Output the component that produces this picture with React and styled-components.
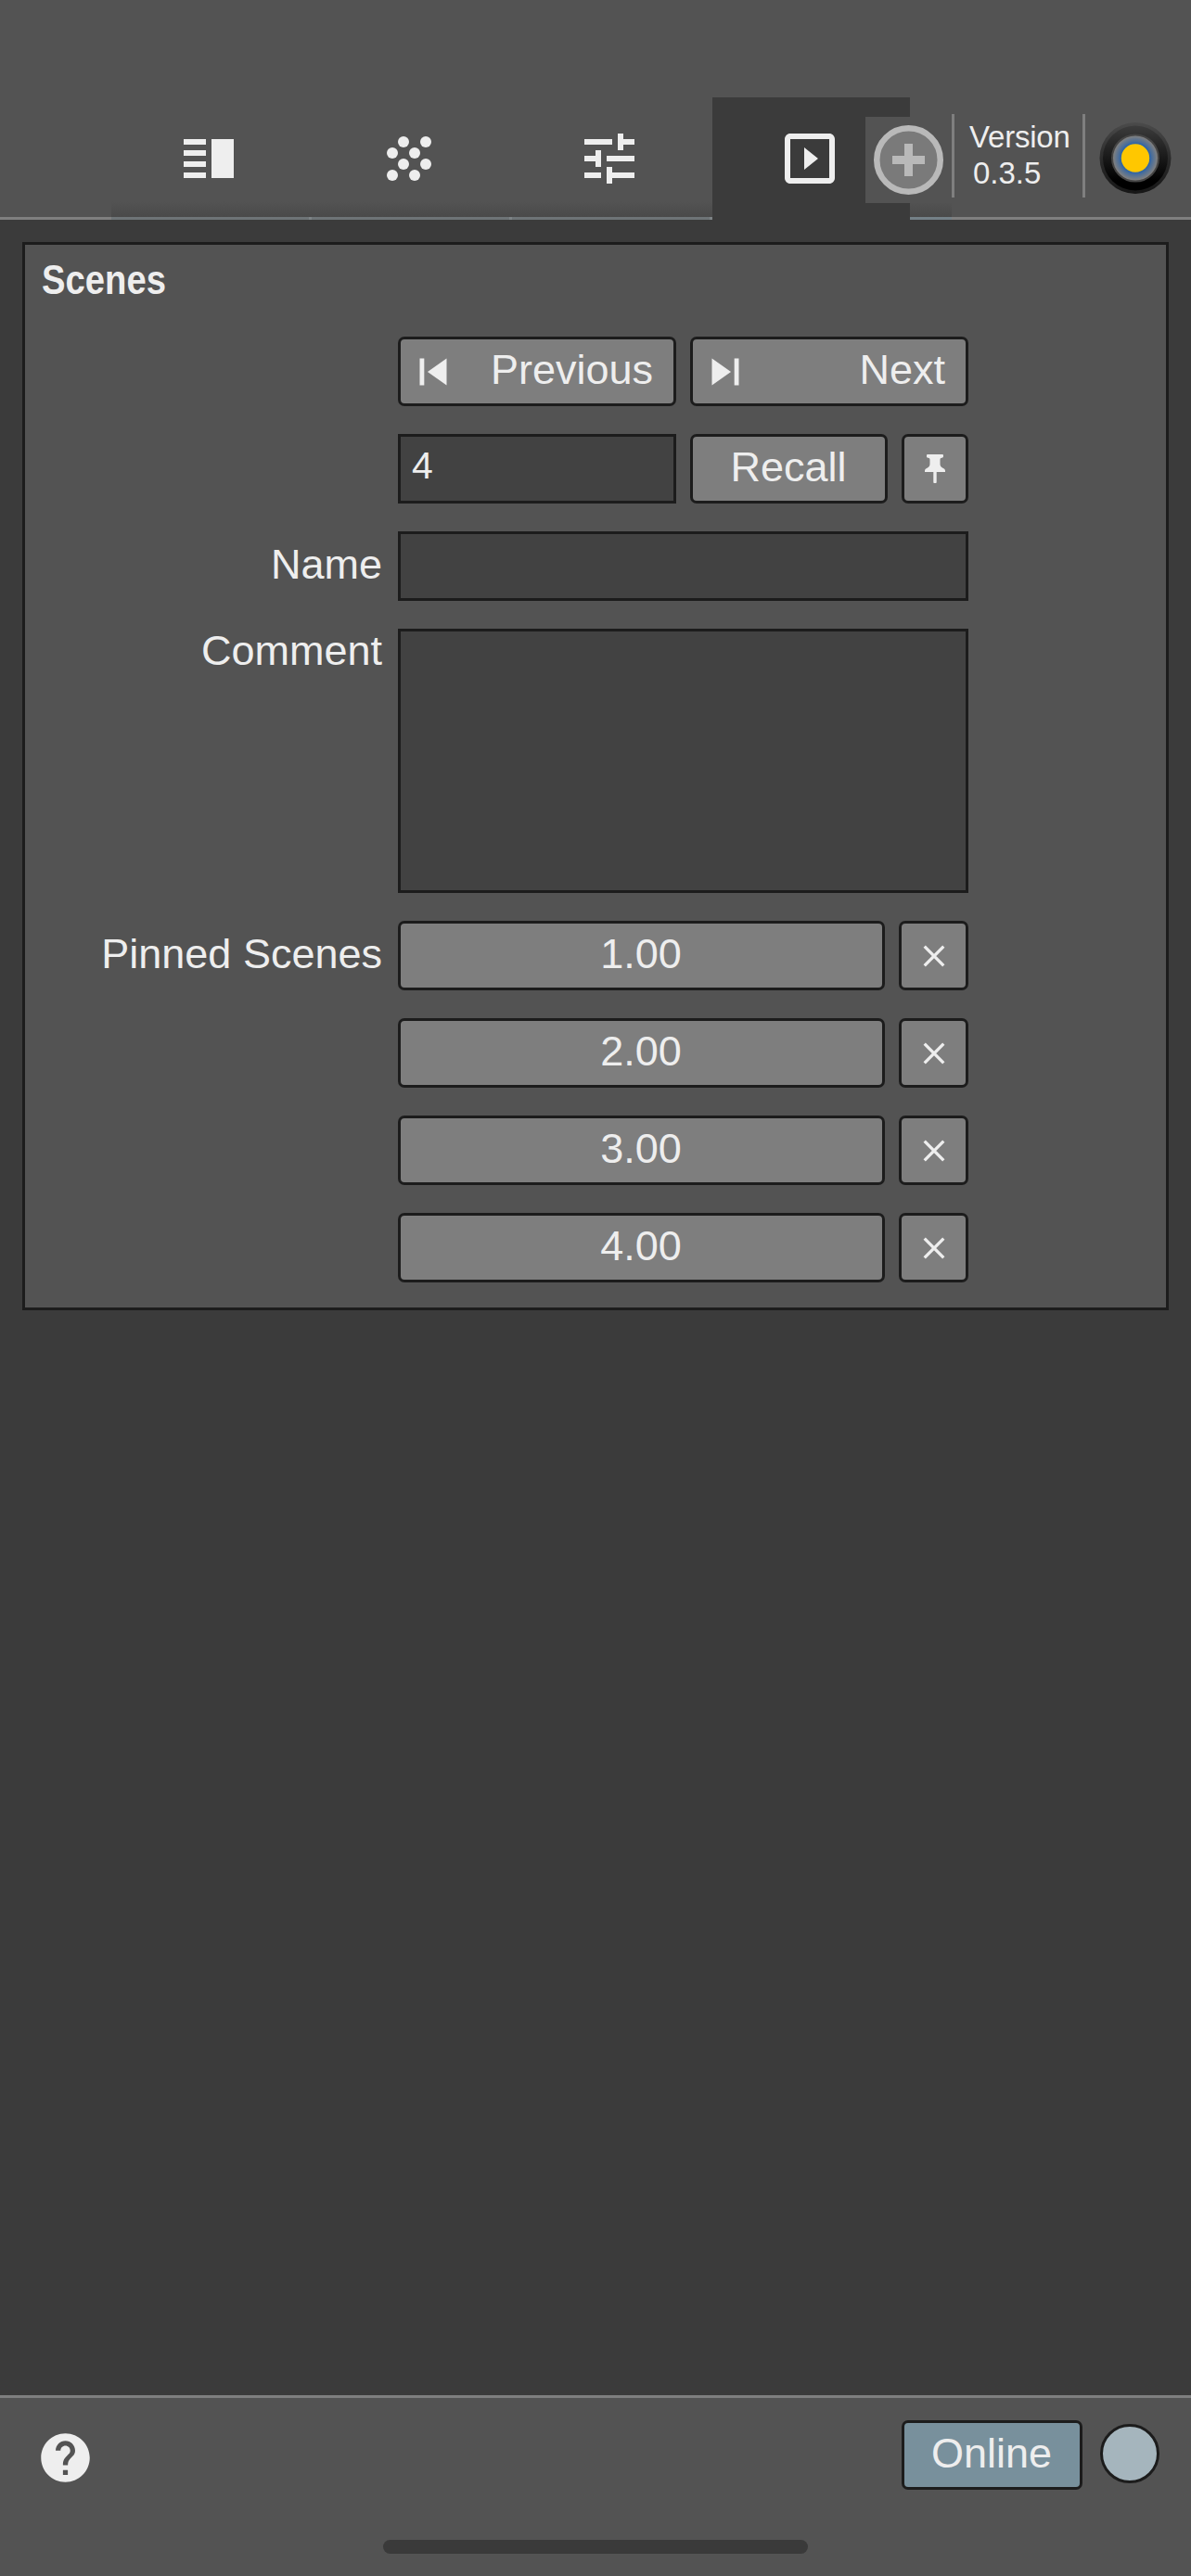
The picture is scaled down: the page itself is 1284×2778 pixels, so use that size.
import React from "react";
import styled, { createGlobalStyle, css } from "styled-components";

const GlobalStyle = createGlobalStyle`
  * { box-sizing: border-box; }
  html, body { margin: 0; padding: 0; background: #3b3b3b; }
  body {
    color: #eee;
    font-family: "Liberation Sans", Arial, sans-serif;
    font-size: 45px;
    line-height: 52px;
  }
  button, input, textarea { font: inherit; color: inherit; margin: 0; }
`;

const Screen = styled.div`
  display: flex;
  flex-direction: column;
  width: 1284px;
  height: 2778px;
  overflow: hidden;
  background: #3b3b3b;
`;

const Header = styled.header`
  position: relative;
  display: flex;
  flex: none;
  height: 237px;
  padding-top: 105px;
  background: #535353;
`;

const HeaderSpacer = styled.div`
  width: 120px;
  border-bottom: 3px solid #7f7f7f;
`;

const Tabs = styled.nav`
  display: flex;
  width: 906px;
  overflow: hidden;
`;

const shade = css`
  background: linear-gradient(to bottom, #535353 112px, #4a4a4a 129px);
`;

const Tab = styled.button`
  flex: none;
  display: flex;
  align-items: flex-start;
  width: 213px;
  padding: 30px 0 0 69px;
  border: 0;
  border-bottom: 3px solid ${(p) => p.$line || "#6e7477"};
  ${shade}
  ${(p) => p.$active && "background: #3b3b3b; border-bottom-color: #3b3b3b;"}
`;

const TabEdge = styled.div`
  flex: none;
  width: 3px;
  border-bottom: 3px solid ${(p) => p.$line || "#7d8386"};
  ${shade}
`;

const AddButton = styled.button`
  position: absolute;
  left: 933px;
  top: 126px;
  display: flex;
  align-items: center;
  justify-content: center;
  width: 93px;
  height: 93px;
  padding: 0;
  border: 0;
  background: #535353;
`;

const HeaderInfo = styled.div`
  flex: 1;
  display: flex;
  align-items: flex-start;
  padding-top: 18px;
  border-bottom: 3px solid #7f7f7f;
`;

const Version = styled.div`
  display: flex;
  flex-direction: column;
  width: 144px;
  height: 90px;
  padding: 5px 0 0 16px;
  border: solid #7f7f7f;
  border-width: 0 3px;
  font-size: 33px;
  line-height: 39px;
  letter-spacing: -0.2px;
`;

const VersionNumber = styled.span`
  padding-left: 4px;
  letter-spacing: 0;
`;

const LogoSlot = styled.div`
  display: flex;
  margin: 9px 0 0 15px;
`;

const Main = styled.main`
  flex: 1;
  padding: 24px 24px 0 24px;
`;

const Panel = styled.section`
  width: 1236px;
  height: 1152px;
  border: 3px solid #1c1c1c;
  background: #535353;
`;

const PanelTitle = styled.h2`
  height: 99px;
  margin: 0;
  padding: 12px 0 0 18px;
  font-size: 45px;
  line-height: 52px;
  font-weight: 700;
`;

const TitleText = styled.span`
  display: inline-block;
  transform: scaleX(0.85);
  transform-origin: left;
`;

const Form = styled.div`
  display: grid;
  grid-template-columns: 387px 615px;
  column-gap: 15px;
  row-gap: 30px;
`;

const Label = styled.label`
  grid-column: 1;
  height: 52px;
  margin-top: ${(p) => (p.$top ? -2 : 10)}px;
  padding-right: 2px;
  text-align: right;
  white-space: nowrap;
`;

const Field = styled.div`
  grid-column: 2;
  display: flex;
  gap: 15px;
`;

const Button = styled.button`
  display: flex;
  align-items: center;
  justify-content: ${(p) => (p.$spread ? "space-between" : "center")};
  flex: ${(p) => (p.$w ? "none" : 1)};
  width: ${(p) => (p.$w ? p.$w + "px" : "auto")};
  height: 75px;
  padding: ${(p) => (p.$spread ? "0 21px 0 6px" : "0")};
  border: 3px solid #1c1c1c;
  border-radius: 7px;
  background: ${(p) => (p.$online ? "#78909c" : "#7e7e7e")};
`;

const ButtonText = styled.span`
  padding: 0 1px 3px 0;
`;

const TextInput = styled.input`
  width: ${(p) => p.$w}px;
  height: 75px;
  padding: 0 12px 7px;
  border: 3px solid #1c1c1c;
  border-radius: 0;
  background: #424242;
  font-size: 41px;
  outline: none;
`;

const CommentBox = styled.textarea`
  display: block;
  width: 615px;
  height: 285px;
  padding: 12px;
  border: 3px solid #1c1c1c;
  border-radius: 0;
  background: #424242;
  resize: none;
  outline: none;
`;

const Footer = styled.footer`
  display: flex;
  flex-direction: column;
  align-items: center;
  flex: none;
  height: 195px;
  border-top: 3px solid #7f7f7f;
  background: #535353;
`;

const FooterBar = styled.div`
  display: flex;
  align-items: flex-start;
  width: 100%;
  height: 153px;
  padding: 24px 34px 0 39px;
`;

const HelpSlot = styled.div`
  display: flex;
  flex: 1;
  padding-top: 9px;
`;

const StatusDot = styled.div`
  width: 64px;
  height: 64px;
  margin: 4px 0 0 19px;
  border: 3px solid #1c1c1c;
  border-radius: 50%;
  background: #a5b5bd;
`;

const HomeIndicator = styled.div`
  width: 458px;
  height: 15px;
  border-radius: 8px;
  background: #3a3a3a;
`;

const Svg = styled.svg`
  display: block;
  flex: none;
  fill: #eee;
`;

const Icon = ({ size, d }) => (
  <Svg width={size} height={size} viewBox="0 0 24 24">
    <path d={d} />
  </Svg>
);

const TUNE =
  "M3 17v2h6v-2H3zM3 5v2h10V5H3zm10 16v-2h8v-2h-8v-2h-2v6h2zM7 9v2H3v2h4v2h2V9H7zm14 4v-2H11v2h10zm-6-4h2V7h4V5h-4V3h-2v6z";
const SPLIT =
  "M3 15h8v-2H3v2zm0 4h8v-2H3v2zm0-8h8V9H3v2zm0-6v2h8V5H3zm10 0h8v14h-8V5z";
const SLIDESHOW =
  "M10 8v8l5-4-5-4zm9-5H5c-1.1 0-2 .9-2 2v14c0 1.1.9 2 2 2h14c1.1 0 2-.9 2-2V5c0-1.1-.9-2-2-2zm0 16H5V5h14v14z";
const HELP =
  "M12 2C6.48 2 2 6.48 2 12s4.48 10 10 10 10-4.48 10-10S17.52 2 12 2zm1 17h-2v-2h2v2zm2.07-7.75l-.9.92C13.45 12.9 13 13.5 13 15h-2v-.5c0-1.1.45-2.1 1.17-2.83l1.24-1.26c.37-.36.59-.86.59-1.41 0-1.1-.9-2-2-2s-2 .9-2 2H8c0-2.21 1.79-4 4-4s4 1.79 4 4c0 .88-.36 1.68-.93 2.25z";
const PREVIOUS = "M6 6h2v12H6zm3.5 6l8.500 6V6z";
const NEXT = "M6 18l8.500-6L6 6v12zM16 6v12h2V6h-2z";

const GRAIN_DOTS = [
  [10, 6], [18, 6], [6, 10], [14, 10],
  [10, 14], [18, 14], [6, 18], [14, 18],
];

const GrainIcon = () => (
  <Svg width="72" height="72" viewBox="0 0 24 24">
    {GRAIN_DOTS.map(([x, y]) => (
      <circle key={`${x}-${y}`} cx={x} cy={y} r="2" />
    ))}
  </Svg>
);

const PlusIcon = () => (
  <Svg width="75" height="75" viewBox="0 0 75 75">
    <circle cx="37.5" cy="37.5" r="34.25" fill="#7a7a7a" stroke="#b9b9b9" strokeWidth="6.5" />
    <path d="M33 20h9v13h13v9h-13v13h-9v-13h-13v-9h13z" fill="#b9b9b9" />
  </Svg>
);

const PinIcon = () => (
  <Svg width="22" height="31" viewBox="0 0 22 31">
    <path d="M3 0h16q1 0 1 1v1.3q0 1.3-1.6 1.5c-1.3.2-1.9.7-1.9 2v4.4c0 2.2.9 3.6 3.4 4.8 1.6.8 2.1 1.5 2.1 3v1H12.7v10.800q0 1.500-1.700 1.500t-1.700-1.500V19H0v-1c0-1.500.500-2.200 2.100-3 2.500-1.200 3.400-2.600 3.400-4.800V5.800c0-1.300-.6-1.800-1.900-2C2.300 3.600 2 3.300 2 2.300V1q0-1 1-1z" />
  </Svg>
);

const CloseIcon = () => (
  <Svg width="24" height="24" viewBox="0 0 24 24">
    <path d="M1.700 1.700l20.600 20.600M22.300 1.700l-20.600 20.600" stroke="#eee" strokeWidth="3.300" />
  </Svg>
);

const Logo = () => (
  <Svg width="78" height="78" viewBox="0 0 78 78">
    <defs>
      <linearGradient id="rim" x1="0" y1="0" x2="0" y2="1">
        <stop offset="0" stopColor="#4b4b4b" />
        <stop offset="0.5" stopColor="#2b2b2b" />
        <stop offset="1" stopColor="#161616" />
      </linearGradient>
      <linearGradient id="face" x1="0" y1="0" x2="0" y2="1">
        <stop offset="0" stopColor="#3c3c3c" />
        <stop offset="0.85" stopColor="#000" />
      </linearGradient>
      <radialGradient id="glow">
        <stop offset="0.58" stopColor="#1f5fae" />
        <stop offset="0.72" stopColor="#4b6e99" />
        <stop offset="0.95" stopColor="#808080" />
      </radialGradient>
    </defs>
    <circle cx="39" cy="38.500" r="38.500" fill="url(#rim)" />
    <circle cx="39" cy="38.500" r="35" fill="url(#face)" />
    <circle cx="39" cy="38.500" r="25" fill="url(#glow)" stroke="#454545" strokeWidth="2" />
    <circle cx="39" cy="38.500" r="15.200" fill="#ffc700" />
  </Svg>
);

const PINNED = ["1.00", "2.00", "3.00", "4.00"];

export default function App() {
  return (
    <>
      <GlobalStyle />
      <Screen>
        <Header>
          <HeaderSpacer />
          <Tabs>
            <Tab><Icon size={72} d={SPLIT} /></Tab>
            <TabEdge />
            <Tab><GrainIcon /></Tab>
            <TabEdge />
            <Tab><Icon size={72} d={TUNE} /></Tab>
            <TabEdge />
            <Tab $active><Icon size={72} d={SLIDESHOW} /></Tab>
            <TabEdge $line="#748087" />
            <Tab $line="#748087" />
          </Tabs>
          <HeaderInfo>
            <Version>
              <span>Version</span>
              <VersionNumber>0.3.5</VersionNumber>
            </Version>
            <LogoSlot><Logo /></LogoSlot>
          </HeaderInfo>
          <AddButton><PlusIcon /></AddButton>
        </Header>

        <Main>
          <Panel>
            <PanelTitle><TitleText>Scenes</TitleText></PanelTitle>
            <Form>
              <Field>
                <Button $spread>
                  <Icon size={58} d={PREVIOUS} />
                  <ButtonText>Previous</ButtonText>
                </Button>
                <Button $spread>
                  <Icon size={58} d={NEXT} />
                  <ButtonText>Next</ButtonText>
                </Button>
              </Field>
              <Field>
                <TextInput $w={300} defaultValue="4" />
                <Button $w={213}><ButtonText>Recall</ButtonText></Button>
                <Button $w={72}><PinIcon /></Button>
              </Field>
              <Label>Name</Label>
              <Field><TextInput $w={615} /></Field>
              <Label $top>Comment</Label>
              <Field><CommentBox /></Field>
              <Label>Pinned Scenes</Label>
              {PINNED.map((scene) => (
                <Field key={scene}>
                  <Button $w={525}><ButtonText>{scene}</ButtonText></Button>
                  <Button $w={75}><CloseIcon /></Button>
                </Field>
              ))}
            </Form>
          </Panel>
        </Main>

        <Footer>
          <FooterBar>
            <HelpSlot><Icon size={63} d={HELP} /></HelpSlot>
            <Button $w={195} $online><ButtonText>Online</ButtonText></Button>
            <StatusDot />
          </FooterBar>
          <HomeIndicator />
        </Footer>
      </Screen>
    </>
  );
}
